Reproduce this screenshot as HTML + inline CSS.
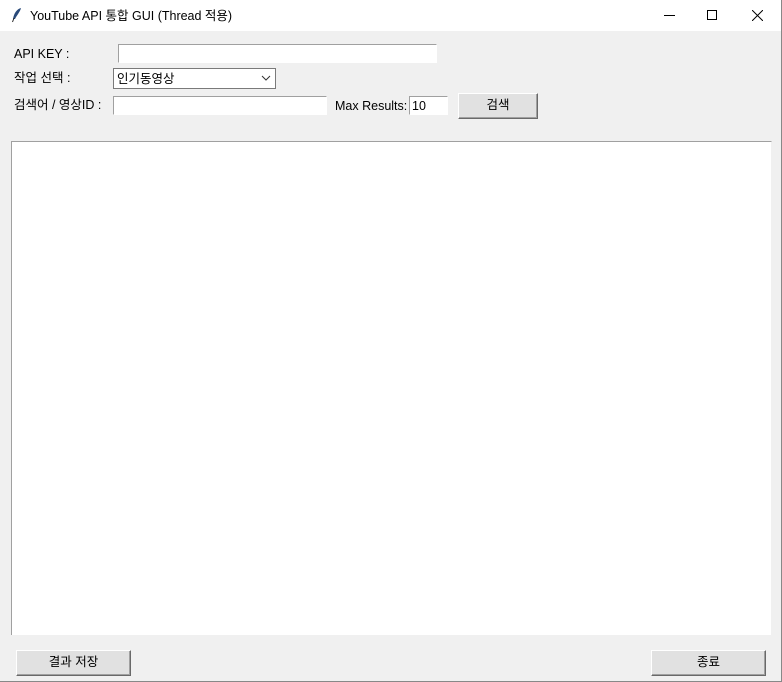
<!DOCTYPE html>
<html><head><meta charset="utf-8"><style>
*{margin:0;padding:0;box-sizing:border-box}
body{width:782px;height:682px;background:#f0f0f0;font-family:"Liberation Sans","Noto Sans CJK KR",sans-serif;font-size:12px;color:#000;position:relative;overflow:hidden}
.a{position:absolute}
.title{left:0;top:0;width:782px;height:31px;background:#fff}
.lbl{position:absolute;font-size:12.5px;line-height:16px}
.entry{position:absolute;background:#fff;border-top:1px solid #a0a0a0;border-left:1px solid #a0a0a0;border-bottom:1px solid #fff;border-right:1px solid #fff}
.btn{position:absolute;background:#e1e1e1;border-top:1px solid #fff;border-left:1px solid #fff;border-right:1px solid #696969;border-bottom:1px solid #696969;box-shadow:inset -1px -1px 0 #a0a0a0;text-align:center;font-size:12.5px}
</style></head><body>
<div class="a title"></div>
<svg class="a" style="left:11px;top:7px" width="12" height="16" viewBox="0 0 12 16"><path d="M10 1 C6 2 3 6 2 12 L4 12 C6 8 9 5 10 1 Z" fill="#2a4a7a"/><path d="M3 11 L1.5 15" stroke="#222" stroke-width="1"/></svg>
<div class="lbl" style="left:30px;top:8px">YouTube API 통합 GUI (Thread 적용)</div>
<div class="a" style="left:664px;top:15px;width:11px;height:1px;background:#000"></div>
<div class="a" style="left:707px;top:10px;width:10px;height:10px;border:1px solid #000"></div>
<svg class="a" style="left:752px;top:10px" width="11" height="11"><path d="M0 0L11 11M11 0L0 11" stroke="#000" stroke-width="1"/></svg>

<div class="lbl" style="left:14px;top:46px">API KEY :</div>
<div class="entry" style="left:118px;top:44px;width:319px;height:19px"></div>
<div class="lbl" style="left:14px;top:70px">작업 선택 :</div>
<div class="a" style="left:113px;top:68px;width:163px;height:21px;background:#fff;border:1px solid #7a7a7a"></div>
<div class="lbl" style="left:117px;top:71px">인기동영상</div>
<svg class="a" style="left:261px;top:75px" width="10" height="6"><path d="M1 1L5 5L9 1" stroke="#333" fill="none"/></svg>
<div class="lbl" style="left:14px;top:97px">검색어 / 영상ID :</div>
<div class="entry" style="left:113px;top:96px;width:214px;height:19px"></div>
<div class="lbl" style="left:335px;top:98px">Max Results:</div>
<div class="entry" style="left:409px;top:96px;width:39px;height:19px"></div>
<div class="lbl" style="left:412px;top:98px">10</div>
<div class="btn" style="left:458px;top:93px;width:80px;height:26px;line-height:23px">검색</div>

<div class="a" style="left:11px;top:141px;width:761px;height:494px;background:#fff;border-top:1px solid #a0a0a0;border-left:1px solid #a0a0a0;border-right:1px solid #f0f0f0"></div>

<div class="btn" style="left:16px;top:650px;width:115px;height:26px;line-height:23px">결과 저장</div>
<div class="btn" style="left:651px;top:650px;width:115px;height:26px;line-height:23px">종료</div>
<div class="a" style="left:781px;top:0;width:1px;height:682px;background:#888"></div>
<div class="a" style="left:0;top:681px;width:782px;height:1px;background:#888"></div>
</body></html>
